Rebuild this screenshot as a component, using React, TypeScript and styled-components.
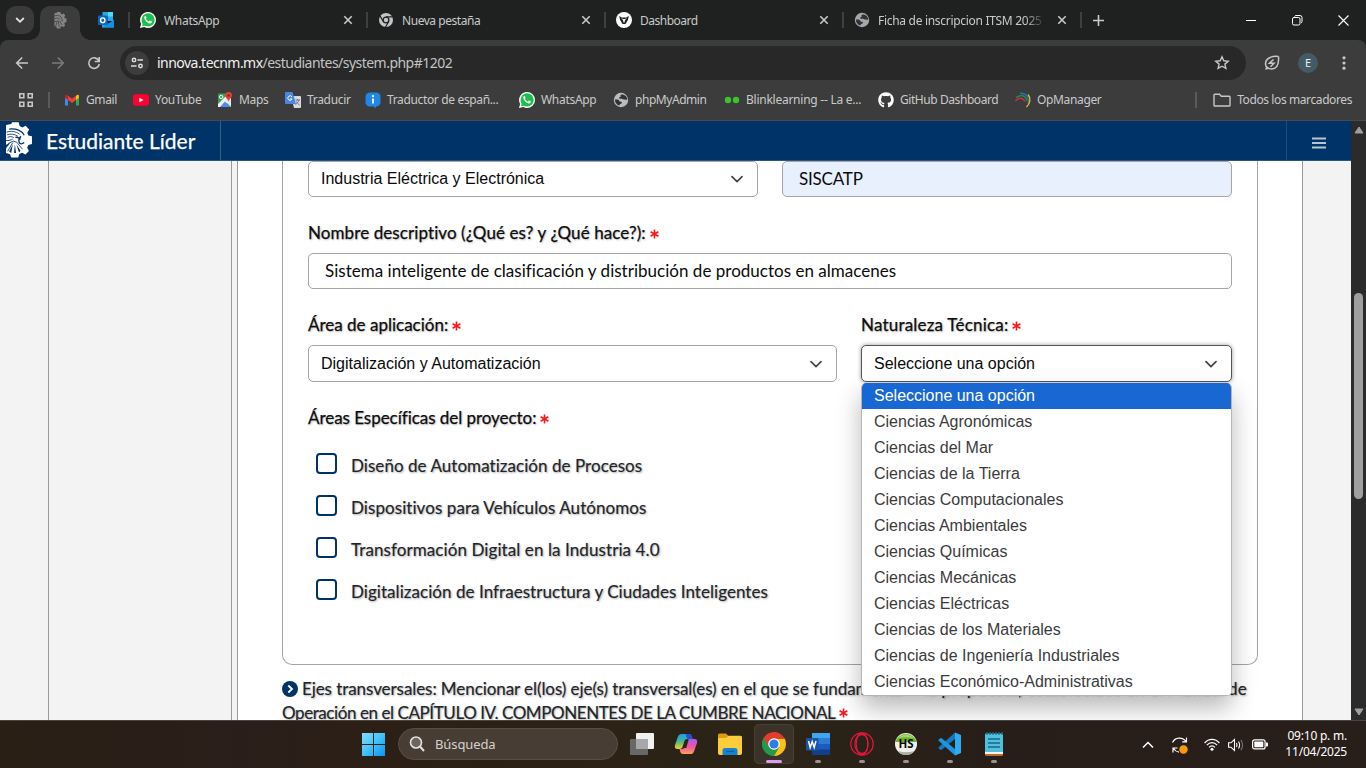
import React from "react";
import styled, { createGlobalStyle, css } from "styled-components";
import { FaGithub } from "react-icons/fa";

const uiFont = `"Noto Sans", "Open Sans", sans-serif`;
const pageFont = `"Lato", "Open Sans", sans-serif`;
const fieldFont = `"Liberation Sans", Arial, sans-serif`;

const GlobalStyle = createGlobalStyle`
  * { box-sizing: border-box; }
  html, body { margin: 0; padding: 0; overflow: hidden; }
  svg { display: block; flex: none; }
`;

const Screen = styled.div`
  width: 1366px;
  height: 768px;
  display: flex;
  flex-direction: column;
  overflow: hidden;
  font-family: ${uiFont};
  font-size: 12px;
`;

/* ---------- Browser tabs ---------- */

const TabStrip = styled.div`
  display: flex;
  align-items: center;
  height: 40px;
  padding-left: 6px;
  background: #1f2120;
  color: #c9cac9;
  flex: none;
`;

const TabSearch = styled.div`
  width: 28px;
  height: 28px;
  border-radius: 10px;
  background: #3a3a3a;
  display: flex;
  align-items: center;
  justify-content: center;
`;

const ActiveTab = styled.div`
  align-self: flex-end;
  position: relative;
  width: 40px;
  height: 34px;
  margin-left: 6px;
  border-radius: 10px 10px 0 0;
  background: #3c3c3c;
  display: flex;
  align-items: center;
  justify-content: center;
  padding-bottom: 6px;
  &::before,
  &::after {
    content: "";
    position: absolute;
    bottom: 0;
    width: 10px;
    height: 10px;
  }
  &::before {
    left: -10px;
    background: radial-gradient(circle at 0 0, transparent 9.5px, #3c3c3c 10px);
  }
  &::after {
    right: -10px;
    background: radial-gradient(circle at 100% 0, transparent 9.5px, #3c3c3c 10px);
  }
`;

const PinnedTab = styled.div`
  width: 48px;
  display: flex;
  padding-left: 18px;
`;

const Tab = styled.div`
  width: 238px;
  height: 16px;
  border-left: 2px solid #3f4140;
  padding: 0 13px 0 10px;
  display: flex;
  align-items: center;
  gap: 8px;
`;

const TabTitle = styled.span<{ $fade?: boolean; $spacing?: number }>`
  flex: 1;
  min-width: 0;
  overflow: hidden;
  white-space: nowrap;
  line-height: 18px;
  padding-top: 1px;
  letter-spacing: ${(p) => p.$spacing ?? -0.2}px;
  ${(p) =>
    p.$fade &&
    css`
      mask-image: linear-gradient(90deg, #000 calc(100% - 24px), transparent calc(100% - 4px));
    `}
`;

const NewTab = styled.div`
  width: 34px;
  height: 16px;
  border-left: 2px solid #3f4140;
  display: flex;
  align-items: center;
  justify-content: center;
`;

const WindowControls = styled.div`
  margin-left: auto;
  display: flex;
  div {
    width: 46px;
    display: flex;
    justify-content: center;
    align-items: center;
  }
`;

/* ---------- Toolbar ---------- */

const Toolbar = styled.div`
  display: flex;
  align-items: center;
  height: 46px;
  padding-left: 4px;
  background: #3c3c3c;
  border-radius: 8px 8px 0 0;
  flex: none;
`;

const ChromeBack = styled.div`
  background: #1f2120;
  flex: none;
`;

const ToolButton = styled.div`
  width: 36px;
  display: flex;
  justify-content: center;
`;

const Omnibox = styled.div`
  width: 1126px;
  height: 34px;
  margin: 0 8px 0 8px;
  border-radius: 17px;
  background: #282828;
  display: flex;
  align-items: center;
  padding: 0 16px 0 5px;
`;

const SiteInfo = styled.div`
  width: 24px;
  height: 24px;
  border-radius: 12px;
  background: #3d3d3d;
  display: flex;
  align-items: center;
  justify-content: center;
`;

const Url = styled.span`
  flex: 1;
  margin-left: 8px;
  padding-bottom: 1px;
  font-size: 14px;
  letter-spacing: -0.53px;
  color: #c3c4c3;
  b {
    font-weight: 400;
    color: #f1f1f1;
  }
`;

const Avatar = styled.div`
  width: 20px;
  height: 20px;
  border-radius: 10px;
  background: #455a67;
  color: #e6eef2;
  font-size: 11px;
  line-height: 20px;
  text-align: center;
`;

/* ---------- Bookmarks ---------- */

const Bookmarks = styled.div`
  display: flex;
  align-items: center;
  height: 35px;
  padding: 0 14px 6px 18px;
  background: #3c3c3c;
  border-bottom: 1px solid #4a4a4a;
  color: #c9cac9;
  flex: none;
`;

const BarDivider = styled.div`
  width: 2px;
  height: 16px;
  flex: none;
  background: #5a5a5a;
`;

const Bookmark = styled.div<{ $width?: number; $spacing?: number }>`
  width: ${(p) => (p.$width ? `${p.$width}px` : "auto")};
  flex: none;
  display: flex;
  align-items: center;
  gap: 6px;
  white-space: nowrap;
  line-height: 18px;
  letter-spacing: ${(p) => p.$spacing ?? -0.2}px;
`;

const BookmarkList = styled.div`
  display: flex;
  width: 1131px;
  padding-left: 14px;
`;

const AllBookmarks = styled.div`
  display: flex;
  margin-left: auto;
`;

/* ---------- Web page ---------- */

const Viewport = styled.div`
  display: flex;
  height: 599px;
  flex: none;
  overflow: hidden;
`;

const Page = styled.div`
  width: 1351px;
  display: flex;
  flex-direction: column;
  font-family: ${pageFont};
`;

const Header = styled.div`
  height: 40px;
  background: #003468;
  border-bottom: 1px solid #2a5583;
  display: flex;
  flex: none;
`;

const Brand = styled.div`
  width: 221px;
  border-right: 1px solid #355f88;
  padding-left: 5px;
  display: flex;
  align-items: center;
  gap: 13px;
  color: #fff;
  font-size: 21px;
  letter-spacing: 0;
  -webkit-text-stroke: 0.25px currentColor;
`;

const MenuButton = styled.div`
  margin-left: auto;
  width: 65px;
  border-left: 1px solid #1f4c7b;
  display: flex;
  align-items: center;
  justify-content: center;
  padding-top: 5px;
`;

const Columns = styled.div`
  flex: 1;
  min-height: 0;
  display: flex;
  background: #f3f3f3;
`;

const Gutter = styled.div`
  width: 49px;
  border-right: 1px solid #999;
`;

const SideColumn = styled.div`
  width: 183px;
  border-right: 1px solid #999;
  margin-right: 5px;
`;

const Main = styled.div`
  width: 1066px;
  border-left: 1px solid #999;
  border-right: 1px solid #999;
  background: #fff;
  padding: 0 44px;
  overflow: hidden;
`;

const Panel = styled.div`
  height: 504px;
  border: 1px solid #a5a5a5;
  border-top: 0;
  border-radius: 0 0 10px 10px;
  padding: 0 25px;
`;

const Row = styled.div`
  display: flex;
  gap: 24px;
`;

const FieldGroup = styled.div<{ $width: number }>`
  position: relative;
  width: ${(p) => p.$width}px;
`;

const Label = styled.div<{ $spacing?: number }>`
  height: 56px;
  padding-top: 26px;
  line-height: 20px;
  font-size: 17px;
  color: #0c0c0c;
  -webkit-text-stroke: 0.25px currentColor;
  text-shadow: 1px 1px 2px #bbb;
  white-space: nowrap;
  letter-spacing: ${(p) => p.$spacing ?? 0}px;
`;

const Required = styled.span`
  margin-left: 4px;
  display: inline-flex;
`;

const Select = styled.div<{ $height?: number; $open?: boolean }>`
  height: ${(p) => p.$height ?? 37}px;
  border: 1px solid ${(p) => (p.$open ? "#555" : "#a5a5a5")};
  border-radius: 5px;
  padding: 0 14px 0 12px;
  display: flex;
  align-items: center;
  justify-content: space-between;
  background: #fff;
  font: 16px ${fieldFont};
  color: #0a0a0a;
  ${(p) =>
    p.$open &&
    css`
      box-shadow: 0 0 4px rgba(0, 0, 0, 0.4);
    `}
`;

const Input = styled.div<{ $filled?: boolean; $spacing?: number }>`
  height: 36px;
  border: 1px solid #a5a5a5;
  border-radius: 5px;
  padding: 0 16px;
  line-height: 34px;
  background: ${(p) => (p.$filled ? "#e8f0fe" : "#fff")};
  font-size: 17px;
  letter-spacing: ${(p) => p.$spacing ?? 0}px;
  color: #0a0a0a;
  white-space: nowrap;
`;

const Dropdown = styled.div`
  position: absolute;
  top: 94px;
  left: 0;
  width: 371px;
  border: 1px solid #b5b5b5;
  border-top: 0;
  border-radius: 5px;
  background: #fff;
  overflow: hidden;
  box-shadow: 0 12px 24px rgba(0, 0, 0, 0.28);
  z-index: 2;
`;

const Option = styled.div<{ $selected?: boolean }>`
  height: 26px;
  padding-left: 12px;
  font: 16px/26px ${fieldFont};
  color: ${(p) => (p.$selected ? "#fff" : "#3b3b3b")};
  background: ${(p) => (p.$selected ? "#1967d2" : "#fff")};
`;

const CheckList = styled.div`
  padding: 11px 0 0 8px;
`;

const CheckRow = styled.div`
  height: 42px;
  display: flex;
  gap: 14px;
`;

const CheckBox = styled.span`
  width: 21px;
  height: 21px;
  margin-top: 4px;
  border: 2px solid #003468;
  border-radius: 4px;
  background: #fff;
`;

const CheckText = styled.span<{ $spacing?: number }>`
  margin-top: 7px;
  font-size: 17px;
  line-height: 20px;
  color: #212529;
  text-shadow: 1px 1px 2px #aaa;
  white-space: nowrap;
  letter-spacing: ${(p) => p.$spacing ?? 0}px;
  -webkit-text-stroke: 0.15px currentColor;
`;

const Note = styled.div`
  margin-top: 12px;
  font-size: 17px;
  line-height: 24px;
  color: #212529;
  text-shadow: 1px 1px 2px #aaa;
  -webkit-text-stroke: 0.15px currentColor;
`;

const NoteLine = styled.div<{ $spacing: number }>`
  display: flex;
  align-items: center;
  white-space: nowrap;
  letter-spacing: ${(p) => p.$spacing}px;
`;

const NoteEnd = styled.span`
  margin-left: auto;
  padding-right: 11px;
  letter-spacing: 0.2px;
`;

const Scrollbar = styled.div`
  width: 15px;
  background: #2b2b2b;
  display: flex;
  flex-direction: column;
  align-items: center;
  padding: 5px 0 4px;
`;

const Thumb = styled.div`
  width: 9px;
  height: 206px;
  margin: 159px 0 auto;
  border-radius: 5px;
  background: #9f9f9f;
`;

/* ---------- Taskbar ---------- */

const Taskbar = styled.div`
  height: 48px;
  flex: none;
  border-top: 1px solid #48443f;
  background: linear-gradient(90deg, #2a1f15 0%, #291e19 18%, #2d2015 32%, #2b2417 58%, #281e19 72%, #281e1a 100%);
  display: flex;
  align-items: center;
  padding: 0 19px 0 354px;
`;

const StartButton = styled.div`
  width: 44px;
  padding-left: 8px;
`;

const SearchBox = styled.div`
  width: 220px;
  height: 32px;
  margin: 0 2px 1px 0;
  border-radius: 16px;
  border: 1px solid #574e44;
  background: #483d34;
  display: flex;
  align-items: center;
  gap: 10px;
  padding-left: 10px;
  font-size: 13px;
  letter-spacing: -0.1px;
  color: #d6d1cc;
`;

const AppCell = styled.div<{ $active?: boolean }>`
  position: relative;
  width: 40px;
  height: 40px;
  margin: 0 2px 1px;
  border-radius: 5px;
  display: flex;
  align-items: center;
  justify-content: center;
  ${(p) =>
    p.$active &&
    css`
      background: #3b3329;
      box-shadow: inset 0 0 0 1px #454036;
    `}
`;

const RunMark = styled.i<{ $active?: boolean }>`
  position: absolute;
  bottom: 1px;
  left: ${(p) => (p.$active ? 12 : 17)}px;
  width: ${(p) => (p.$active ? 16 : 6)}px;
  height: 3px;
  border-radius: 2px;
  background: ${(p) => (p.$active ? "#dc9df0" : "#98938d")};
`;

const Tray = styled.div`
  margin-left: auto;
  display: flex;
  align-items: center;
  color: #fff;
`;

const TrayIcon = styled.div<{ $width: number }>`
  width: ${(p) => p.$width}px;
  display: flex;
  justify-content: center;
`;

const Clock = styled.div`
  width: 71px;
  padding-bottom: 1px;
  text-align: right;
  line-height: 16px;
  font-size: 12px;
  letter-spacing: -0.22px;
  white-space: nowrap;
`;

/* ---------- Icons ---------- */

const CloseIcon = () => (
  <svg width="10" height="10" viewBox="0 0 10 10" stroke="#c9cac9" strokeWidth="1.6">
    <path d="M1.3 1.3l7.4 7.4M8.7 1.3L1.3 8.7" />
  </svg>
);

const WhatsAppIcon = () => (
  <svg width="16" height="16" viewBox="0 0 16 16">
    <path d="M8 0a8 8 0 0 1 0 16c-1.4 0-2.7-.3-3.8-1L0 16l1.1-4A8 8 0 0 1 8 0z" fill="#fff" />
    <circle cx="8.1" cy="7.9" r="6.6" fill="#1dbf4e" />
    <path d="M2 14.2l.9-3.2 2.5 2.4z" fill="#1dbf4e" />
    <path d="M5.7 4.2c-.3-.3-.8-.1-1.1.3-.7.9-.5 2.1.9 3.9 1.6 2.1 3.3 3.1 4.7 3 .9-.1 1.7-.8 1.7-1.6 0-.3-.1-.4-2.1-1.3-.5.1-.7 1-1.2.9C7.400 9 6.500 7.900 6 7c0-.4.7-.7.6-1.2z" fill="#fff" />
  </svg>
);

const GlobeIcon = ({ color = "#a4a8ab" }: { color?: string }) => (
  <svg width="16" height="16" viewBox="0 0 16 16">
    <circle cx="8" cy="8" r="7.2" fill={color} />
    <path d="M8.500 2.400c-.7.5-1.300.8-.9 1.600.4.7-.3 1.100-1 1.300-.8.2-.6.9-.1 1.300.8.5 2.200-.3 3 .4.8.8 1.700.2 2.600.6.8.4 1.500.2 2.300-.3C14 4.900 12.200 2.300 8.500 2.400z" fill="#303233" />
    <path d="M2 7.400c1.200.1 2.300-.2 3.400.4.9.5.7 1.500 1.500 1.800.9.3 1.800.1 2 .9.2.9-.7 1.300-1.600 1.500-.7.2-.4 1.100-1.100 1.400C3.600 12.600 1.700 10.500 2 7.400z" fill="#303233" />
  </svg>
);

const ChromeMono = () => (
  <svg width="16" height="16" viewBox="0 0 16 16">
    <circle cx="8" cy="8" r="7" fill="#c3c6c9" />
    <circle cx="8" cy="8" r="3.5" fill="#1f2120" />
    <circle cx="8" cy="8" r="2.2" fill="#c3c6c9" />
    <path d="M8 4.900h6.600M5.300 9.500L2 3.900M10.700 9.500l-3.300 5.700" stroke="#1f2120" strokeWidth="1.200" />
  </svg>
);

const ChromeColor = () => (
  <svg width="24" height="24" viewBox="0 0 24 24">
    <path d="M12 12L1.600 6A12 12 0 0 0 12 24l5.200-9z" fill="#229a4b" />
    <path d="M12 6.600h10.700A12 12 0 0 1 12 24l5.200-9z" fill="#fbc116" />
    <path d="M1.600 6A12 12 0 0 1 12 0c4.400 0 8.400 2.500 10.700 6.600H12L6.500 14z" fill="#e33b2e" />
    <circle cx="12" cy="12" r="5.8" fill="#fff" />
    <circle cx="12" cy="12" r="4.6" fill="#2b7de9" />
  </svg>
);

const OutlookIcon = () => (
  <svg width="16" height="16" viewBox="0 0 16 16">
    <path d="M4.500 0H15v9H4.500z" fill="#2aa8ea" />
    <path d="M10 0h5v4.500h-5z" fill="#50d9ff" />
    <path d="M4.500 4.500H10V9H4.500z" fill="#0364b8" />
    <path d="M4 8l6.500 4L16 8v7.500H4z" fill="#28a8ea" />
    <path d="M4 15.500L16 8v7.500z" fill="#1490df" />
    <rect y="3.500" width="9.500" height="9.500" rx=".8" fill="#0a66bf" />
    <ellipse cx="4.750" cy="8.250" rx="2.200" ry="2.400" fill="none" stroke="#fff" strokeWidth="1.400" />
  </svg>
);

const GearShape = ({ color }: { color: string }) => (
  <path
    fill={color}
    d="M1 2.500l5-.9L6.800 0h6.400l.9 3.600 2.700 1.300 3.100-1.700 3.400 3.600-1.800 3.200 1 2.600 3.500.9v7.300l-3.500 1-1.100 2.600 1.700 3.300-3.400 3.400-3.200-1.900-2.700 1.300-1 3.500H6l-1.100-3.300L1 29.500z"
  />
);

const TecLogo = () => (
  <svg width="28" height="37" viewBox="0 0 27 35">
    <GearShape color="#fff" />
    <g fill="none" stroke="#003468" strokeWidth=".8">
      <path d="M4 6.500c6-1 12 1 14.500 6" strokeWidth="1.200" />
      <path d="M1.500 9.500c4-1.500 9-1 12.500 2M2 12c4-1.200 7-.8 10.500 1.500M2.500 14.500c2-1 4-1 6 .2M1 17.500c2.500.3 5-.3 6.500-1.500" />
      <path d="M10 14.500c2.500-.5 4 .5 5 2M15.500 13.500c-2 1.500-2.700 4-1.500 6.500 1.200 1 3 .8 4.500-.5" strokeWidth="1.300" />
      <path d="M3 20.500l5-2.500 4 1.500M7.500 19.500L2.500 28M12 20l5 6" />
    </g>
    <g fill="#003468">
      <path d="M7.500 21L4 28l2 1.500zM9.500 21l-.8 8.500h2zM11 21l2.500 8 1.500-1.500zM1 21.500l4-1.500-4 5z" />
    </g>
  </svg>
);

const TabLogo = () => (
  <svg width="13" height="17" viewBox="0 0 27 35">
    <GearShape color="#858585" />
    <g fill="none" stroke="#4b4b4b" strokeWidth="2">
      <path d="M1 8c8-3 17 0 16 12M2 14c4-3 8-2 11 2M1 20l8-2M7 19L3 31M9 19l2 12M11 18l6 9" />
    </g>
  </svg>
);

const GmailIcon = () => (
  <svg width="16" height="16" viewBox="0 0 16 16">
    <path d="M1 4v9.500h3V6.500z" fill="#4285f4" />
    <path d="M15 4v9.500h-3V6.500z" fill="#34a853" />
    <path d="M12 3.800L13 3q2-.7 2 1.300v1.500l-3 2.300z" fill="#fbbc04" />
    <path d="M4 3.800L3 3Q1 2.300 1 4.300v1.500l3 2.300z" fill="#c5221f" />
    <path d="M4 3.800l4 3 4-3v4.300l-4 3-4-3z" fill="#ea4335" />
  </svg>
);

const YouTubeIcon = () => (
  <svg width="16" height="16" viewBox="0 0 16 16">
    <rect y="2.300" width="16" height="11.400" rx="3" fill="#ff0033" />
    <path d="M6.300 5.700v4.600L10.500 8z" fill="#fff" />
  </svg>
);

const MapsIcon = () => (
  <svg width="16" height="16" viewBox="0 0 16 16">
    <rect x="1" y="1.500" width="13" height="13.500" rx="1" fill="#34a05a" />
    <path d="M1 12l9-9 4 4-8 8H1z" fill="#f3f3f3" />
    <path d="M7.500 8.500L14 15V6l-3-2z" fill="#e8e8e8" />
    <path d="M3 15l5-5.500 5 5.500z" fill="#4b8bf5" />
    <circle cx="4.200" cy="5" r="1.700" fill="none" stroke="#fff" />
    <path d="M11.500 0a3.500 3.500 0 0 1 3.500 3.500c0 2-3 3.500-3.300 6.500C11.300 7 8 5.500 8 3.500A3.500 3.500 0 0 1 11.500 0z" fill="#dc4437" />
    <circle cx="11.500" cy="3.500" r="1.200" fill="#8b2219" />
  </svg>
);

const TranslateIcon = () => (
  <svg width="16" height="16" viewBox="0 0 16 16">
    <path d="M6 4h9q1 0 1 1v10q0 1-1 1H9z" fill="#d7d9dc" />
    <path d="M1 0h6.500L11 12H1q-1 0-1-1V1q0-1 1-1z" fill="#4a86e8" />
    <path d="M7 4.900A2.200 2.200 0 1 0 7.100 7H5" fill="none" stroke="#fff" strokeWidth="1" />
    <path d="M10.500 8H15M12.500 7v1M14 8c-.5 2-2 3.500-3.500 4.500M11.500 9.500c.5 1.500 1.500 2.500 3 3.500" stroke="#727679" fill="none" />
  </svg>
);

const InfoIcon = () => (
  <svg width="16" height="16" viewBox="0 0 16 16">
    <path d="M4.500.5h7Q15.500 1 15.500 5v5q0 4-4 4.300l-1 1.700-2-1.600h-4Q.5 14 .5 10V5Q.5 1 4.500.5z" fill="#1f86ea" />
    <circle cx="8" cy="4.200" r="1.100" fill="#fff" />
    <path d="M8 6.500v5" stroke="#fff" strokeWidth="1.800" />
  </svg>
);

const BlinkIcon = () => (
  <svg width="16" height="16" viewBox="0 0 16 16" fill="#3cc42b">
    <circle cx="4" cy="8" r="3.200" />
    <circle cx="12" cy="8" r="3.200" />
  </svg>
);

const OpManagerIcon = () => (
  <svg width="16" height="16" viewBox="0 0 16 16" fill="none">
    <path d="M.5 9C3 5.500 8 5 10 9.500" stroke="#d12e43" strokeWidth="1.400" />
    <path d="M1.500 5.500C5.500 2 11 3.500 12 9" stroke="#169a55" strokeWidth="1.400" />
    <path d="M5 1.300C11 .8 15 6 13 12" stroke="#2b71b8" strokeWidth="1.300" />
    <path d="M13 2.500c3 3.500 2.500 9-1.500 12.500" stroke="#f2c01c" strokeWidth="1.300" />
  </svg>
);

const Chevron = () => (
  <svg width="12" height="12" viewBox="0 0 12 12" fill="none" stroke="#424649" strokeWidth="1.700" strokeLinecap="round" strokeLinejoin="round">
    <path d="M1 3.700l5 5 5-5" />
  </svg>
);

const Asterisk = () => (
  <Required>
    <svg width="9" height="10" viewBox="0 0 9 10" stroke="#ff1616" strokeWidth="1.600">
      <path d="M4.500.5v9M.6 2.800l7.800 4.400M8.400 2.800L.6 7.200" />
    </svg>
  </Required>
);

const FolderIcon = () => (
  <svg width="24" height="22" viewBox="0 0 24 22">
    <path d="M0 2q0-1.500 1.500-1.500H8L10.500 3H22q2 0 2 2v15.500H0z" fill="#dd9b10" />
    <path d="M0 6q0-1 1-1h7l2.500-2.300H22.500q1.500 0 1.500 1.500V20q0 2-2 2H2q-2 0-2-2z" fill="#fdcd3d" />
    <path d="M4.500 22v-4.500q0-2.500 2.500-2.500h10q2.500 0 2.500 2.500V22z" fill="#1384cf" />
    <path d="M8 18.500h8" stroke="#0a5d9e" strokeWidth="1.300" />
  </svg>
);

const CopilotIcon = () => (
  <svg width="24" height="22" viewBox="0 0 24 22">
    <defs>
      <linearGradient id="cpA" x1="0" y1="0" x2="0" y2="1">
        <stop offset="0" stopColor="#1d9bea" />
        <stop offset=".5" stopColor="#49b98d" />
        <stop offset="1" stopColor="#f4cf1c" />
      </linearGradient>
      <linearGradient id="cpB" x1="0" y1="0" x2="0" y2="1">
        <stop offset="0" stopColor="#a75cf0" />
        <stop offset=".55" stopColor="#f3579a" />
        <stop offset="1" stopColor="#ffa25b" />
      </linearGradient>
    </defs>
    <path d="M7 1h8q2 0 2.700 2l.8 3H13q-2 0-2.600 2L8.500 14q-.8 2-2.800 2H3.500Q0 16 1 12L4 3.500Q4.800 1 7 1z" fill="url(#cpA)" />
    <path d="M12 1h3q2 0 2.700 2l.8 3h-4Q13 6 12.500 4z" fill="#1d51d8" />
    <path d="M17 21H9q-2 0-2.700-2l-.8-3H8q2 0 2.600-2L13 8q.8-2 2.800-2h4.700Q24 6 23 10l-3 8.500Q19.200 21 17 21z" fill="url(#cpB)" />
    <path d="M10.600 13L12.800 7h1.800l-2.400 8H9.500z" fill="#2b2417" />
  </svg>
);

const WordIcon = () => (
  <svg width="24" height="22" viewBox="0 0 24 22">
    <rect x="6" width="18" height="22" rx="1" fill="#1b5bbd" />
    <rect x="6" width="18" height="5.500" fill="#41a5ee" />
    <rect x="6" y="5.500" width="18" height="5.500" fill="#2b7cd3" />
    <rect x="6" y="16.500" width="18" height="5.500" fill="#123f8c" />
    <rect y="5" width="12.500" height="12.500" rx="1" fill="#1a52ae" />
    <path d="M2.500 8l1.700 6.500L6.200 8.500l2 6L10 8" fill="none" stroke="#fff" strokeWidth="1.500" />
  </svg>
);

const OperaIcon = () => (
  <svg width="24" height="24" viewBox="0 0 24 24" fill="none" stroke="#e3173e" strokeWidth="1.200">
    <circle cx="12" cy="12" r="11.200" />
    <ellipse cx="12" cy="12" rx="5.800" ry="11" />
    <path d="M7.500 4.500C10 .8 17.500 1 18 11.500c0 11-7.500 12.500-10.500 8" />
    <path d="M16 4C11 1 5 3.500 5 12s6 11 11 8" />
  </svg>
);

const HeidiIcon = () => (
  <svg width="22" height="22" viewBox="0 0 22 22">
    <circle cx="11" cy="11" r="11" fill="#f0f0ec" />
    <path d="M.4 9a11 11 0 0 1 21.200 0z" fill="#6cb32a" />
    <path d="M3 5.500Q11-2.500 19 5.500 11 3 3 5.500z" fill="#a4d66c" />
    <path d="M3 18q8 2.500 16 0-3 4-8 4t-8-4z" fill="#a9ada5" />
    <text x="11" y="15" fontSize="11.500" fontWeight="700" textAnchor="middle" fontFamily="Open Sans, sans-serif" fill="#0b0b0b">HS</text>
  </svg>
);

const CodeIcon = () => (
  <svg width="24" height="24" viewBox="0 0 24 24">
    <path d="M17 .5L23 3v18l-6 2.500z" fill="#2fabf1" />
    <path d="M17 .5L.7 15.200q-.5.8.3 1.500l1.300 1.100q.7.4 1.400-.1L17 7z" fill="#1579bf" />
    <path d="M17 23.500L.7 8.800q-.5-.8.3-1.500l1.300-1.100q.7-.4 1.400.1L17 17z" fill="#1f95dc" />
  </svg>
);

const NotepadIcon = () => (
  <svg width="20" height="24" viewBox="0 0 20 24">
    <path d="M1 20h18v2.500q0 1.500-1.500 1.500h-15Q1 24 1 22.500z" fill="#b66c2d" />
    <rect x="1" y="19" width="18" height="3" fill="#f3f3f3" />
    <rect x="1" y="1.500" width="18" height="18.500" rx="1" fill="#52bfdd" />
    <path d="M4 7h12M4 11h12M4 15h12" stroke="#146887" strokeWidth="1.500" />
    <path d="M3 0v3M6 0v3M9 0v3M12 0v3M15 0v3M18 0v3" stroke="#1b6f8d" strokeWidth="1.200" />
  </svg>
);

const DashboardIcon = () => (
  <svg width="16" height="16" viewBox="0 0 16 16">
    <circle cx="8" cy="8" r="8" fill="#fff" />
    <path d="M3.200 3.800l2.300 1.700h5l2.300-1.700-.8 4L9.500 12h-3L4 7.800z" fill="#222" />
    <path d="M5 6.300l2 1.700.5 2.500h1L9 8l2-1.700-2.200.7H7.200z" fill="#fff" />
  </svg>
);

const TaskViewIcon = () => (
  <svg width="24" height="22" viewBox="0 0 24 22">
    <rect x="6" width="18" height="16" rx="1" fill="#f1f1f1" />
    <rect y="6" width="18" height="16" rx="1" fill="#686967" />
    <path d="M6 6h12v10H6z" fill="#a8a8a8" />
  </svg>
);

const TABS = [
  { title: "WhatsApp", icon: <WhatsAppIcon />, spacing: -0.3 },
  { title: "Nueva pestaña", icon: <ChromeMono />, spacing: -0.45 },
  { title: "Dashboard", icon: <DashboardIcon />, spacing: -0.5 },
  { title: "Ficha de inscripcion ITSM 2025 S", icon: <GlobeIcon />, fade: true, spacing: -0.3 },
];

const BOOKMARKS = [
  { name: "Gmail", width: 69, icon: <GmailIcon />, spacing: -0.4 },
  { name: "YouTube", width: 84, icon: <YouTubeIcon />, spacing: -0.3 },
  { name: "Maps", width: 68, icon: <MapsIcon />, spacing: -0.3 },
  { name: "Traducir", width: 80, icon: <TranslateIcon />, spacing: -0.3 },
  { name: "Traductor de españ...", width: 154, icon: <InfoIcon />, spacing: -0.35 },
  { name: "WhatsApp", width: 94, icon: <WhatsAppIcon />, spacing: -0.3 },
  { name: "phpMyAdmin", width: 111, icon: <GlobeIcon color="#b9bdc0" />, spacing: -0.45 },
  { name: "Blinklearning -- La e...", width: 154, icon: <BlinkIcon />, spacing: -0.25 },
  { name: "GitHub Dashboard", width: 137, icon: <FaGithub size={16} color="#fff" />, spacing: -0.43 },
  { name: "OpManager", width: 100, icon: <OpManagerIcon />, spacing: -0.35 },
];

const OPTIONS = [
  "Seleccione una opción",
  "Ciencias Agronómicas",
  "Ciencias del Mar",
  "Ciencias de la Tierra",
  "Ciencias Computacionales",
  "Ciencias Ambientales",
  "Ciencias Químicas",
  "Ciencias Mecánicas",
  "Ciencias Eléctricas",
  "Ciencias de los Materiales",
  "Ciencias de Ingeniería Industriales",
  "Ciencias Económico-Administrativas",
];

const AREAS = [
  { text: "Diseño de Automatización de Procesos", spacing: 0.05 },
  { text: "Dispositivos para Vehículos Autónomos", spacing: 0.07 },
  { text: "Transformación Digital en la Industria 4.0", spacing: 0.09 },
  { text: "Digitalización de Infraestructura y Ciudades Inteligentes", spacing: 0.05 },
];

const APPS = [
  { icon: <TaskViewIcon /> },
  { icon: <CopilotIcon /> },
  { icon: <FolderIcon /> },
  { icon: <ChromeColor />, running: true, active: true },
  { icon: <WordIcon />, running: true },
  { icon: <OperaIcon />, running: true },
  { icon: <HeidiIcon />, running: true },
  { icon: <CodeIcon />, running: true },
  { icon: <NotepadIcon />, running: true },
];

const BrowserTabs = () => (
  <TabStrip>
    <TabSearch>
      <svg width="10" height="10" viewBox="0 0 10 10" fill="none" stroke="#e3e3e3" strokeWidth="1.800">
        <path d="M1.200 3L5 6.800 8.800 3" />
      </svg>
    </TabSearch>
    <ActiveTab>
      <TabLogo />
    </ActiveTab>
    <PinnedTab>
      <OutlookIcon />
    </PinnedTab>
    {TABS.map((tab) => (
      <Tab key={tab.title}>
        {tab.icon}
        <TabTitle $fade={tab.fade} $spacing={tab.spacing}>{tab.title}</TabTitle>
        <CloseIcon />
      </Tab>
    ))}
    <NewTab>
      <svg width="11" height="11" viewBox="0 0 11 11" stroke="#c9cac9" strokeWidth="1.600">
        <path d="M5.500 0v11M0 5.500h11" />
      </svg>
    </NewTab>
    <WindowControls>
      <div>
        <svg width="10" height="10"><path d="M0 5.500h10" stroke="#fff" /></svg>
      </div>
      <div>
        <svg width="11" height="11" viewBox="0 0 11 11" fill="none" stroke="#fff">
          <rect x=".5" y="2.500" width="7.500" height="7.500" rx="1.500" />
          <path d="M2.500 1.500Q3 .5 4 .5h4Q10 .5 10 2.500v4q0 1-1 1.500" />
        </svg>
      </div>
      <div>
        <svg width="11" height="11" viewBox="0 0 11 11" stroke="#fff" strokeWidth="1.100">
          <path d="M.5.5l10 10M10.500.5l-10 10" />
        </svg>
      </div>
    </WindowControls>
  </TabStrip>
);

const BrowserToolbar = () => (
  <ChromeBack>
    <Toolbar>
      <ToolButton>
        <svg width="14" height="14" viewBox="0 0 14 14" fill="none" stroke="#c7c7c7" strokeWidth="1.600">
          <path d="M13 7H2M7.200 1.500L1.700 7l5.500 5.500" />
        </svg>
      </ToolButton>
      <ToolButton>
        <svg width="14" height="14" viewBox="0 0 14 14" fill="none" stroke="#7b7b7b" strokeWidth="1.600">
          <path d="M1 7h11M6.800 1.500L12.300 7l-5.500 5.500" />
        </svg>
      </ToolButton>
      <ToolButton>
        <svg width="14" height="14" viewBox="0 0 14 14" fill="none" stroke="#c7c7c7" strokeWidth="1.600">
          <path d="M11.700 4.500A5.300 5.300 0 1 0 12.300 8M12.200 1v4.500H7.700" />
        </svg>
      </ToolButton>
      <Omnibox>
        <SiteInfo>
          <svg width="14" height="12" viewBox="0 0 14 12" fill="none" stroke="#dcdcdc" strokeWidth="1.500">
            <circle cx="4" cy="3" r="1.700" />
            <path d="M7.500 3H13M1 9h5.500" />
            <circle cx="10.500" cy="9" r="1.700" />
          </svg>
        </SiteInfo>
        <Url><b>innova.tecnm.mx</b>/estudiantes/system.php#1202</Url>
        <svg width="16" height="16" viewBox="0 0 16 16" fill="none" stroke="#c7c7c7" strokeWidth="1.400">
          <path d="M8 1.800l1.800 4 4.400.4-3.300 2.900 1 4.300L8 11.200l-3.900 2.200 1-4.300-3.300-2.900 4.400-.4z" />
        </svg>
      </Omnibox>
      <ToolButton>
        <svg width="16" height="16" viewBox="0 0 16 16" fill="none" stroke="#c7c7c7" strokeWidth="1.500">
          <path d="M14.500 1.500C8 .8 1.500 3 1.500 9c0 2 .7 3.500 2.500 5M14.500 1.500c.5 6-1 12-6.500 12.500-2 .1-3.500-.5-4.500-1.500L1.500 14.500" />
          <path d="M9.500 4.500L5.500 8.200h4.500L6.500 11.800" />
        </svg>
      </ToolButton>
      <ToolButton>
        <Avatar>E</Avatar>
      </ToolButton>
      <ToolButton>
        <svg width="4" height="14" viewBox="0 0 4 14" fill="#c7c7c7">
          <circle cx="2" cy="1.800" r="1.600" />
          <circle cx="2" cy="7" r="1.600" />
          <circle cx="2" cy="12.200" r="1.600" />
        </svg>
      </ToolButton>
    </Toolbar>
  </ChromeBack>
);

const BookmarkBar = () => (
  <Bookmarks>
    <Bookmark $width={30}>
      <svg width="16" height="16" viewBox="0 0 16 16" fill="none" stroke="#c7c7c7" strokeWidth="1.600">
        <path d="M1.800 1.800h4v4h-4zM10.200 1.800h4v4h-4zM1.800 10.200h4v4h-4zM10.200 10.200h4v4h-4z" />
      </svg>
    </Bookmark>
    <BarDivider />
    <BookmarkList>
      {BOOKMARKS.map((b) => (
        <Bookmark key={b.name} $width={b.width} $spacing={b.spacing}>
          {b.icon}
          {b.name}
        </Bookmark>
      ))}
    </BookmarkList>
    <AllBookmarks>
      <Bookmark $spacing={-0.4}>
        <BarDivider />
        <svg width="28" height="16" viewBox="0 0 28 16" fill="none" stroke="#c7c7c7" strokeWidth="1.400">
          <path d="M11 3q0-.8.8-.8h4.700l1.800 2h7.900q.8 0 .8.8v8.200q0 .8-.8.800H11.800q-.8 0-.8-.8z" />
        </svg>
        Todos los marcadores
      </Bookmark>
    </AllBookmarks>
  </Bookmarks>
);

const LabelText = ({ text, spacing }: { text: string; spacing?: number }) => (
  <Label $spacing={spacing}>
    {text}
    <Asterisk />
  </Label>
);

const FormPage = () => (
  <Page>
    <Header>
      <Brand>
        <TecLogo />
        Estudiante Líder
      </Brand>
      <MenuButton>
        <svg width="14" height="14" viewBox="0 0 14 14" stroke="#b7c4d2" strokeWidth="1.800">
          <path d="M0 2.500h14M0 7h14M0 11.500h14" />
        </svg>
      </MenuButton>
    </Header>
    <Columns>
      <Gutter />
      <SideColumn />
      <Main>
        <Panel>
          <Row>
            <FieldGroup $width={450}>
              <Select $height={36}>Industria Eléctrica y Electrónica<Chevron /></Select>
            </FieldGroup>
            <FieldGroup $width={450}>
              <Input $filled $spacing={-0.2}>SISCATP</Input>
            </FieldGroup>
          </Row>
          <LabelText text="Nombre descriptivo (¿Qué es? y ¿Qué hace?):" spacing={0.09} />
          <Input $spacing={0.02}>Sistema inteligente de clasificación y distribución de productos en almacenes</Input>
          <Row>
            <FieldGroup $width={529}>
              <LabelText text="Área de aplicación:" />
              <Select>Digitalización y Automatización<Chevron /></Select>
            </FieldGroup>
            <FieldGroup $width={371}>
              <LabelText text="Naturaleza Técnica:" spacing={0.2} />
              <Select $open>Seleccione una opción<Chevron /></Select>
              <Dropdown>
                {OPTIONS.map((o, i) => (
                  <Option key={o} $selected={i === 0}>{o}</Option>
                ))}
              </Dropdown>
            </FieldGroup>
          </Row>
          <LabelText text="Áreas Específicas del proyecto:" spacing={-0.04} />
          <CheckList>
            {AREAS.map((a) => (
              <CheckRow key={a.text}>
                <CheckBox />
                <CheckText $spacing={a.spacing}>{a.text}</CheckText>
              </CheckRow>
            ))}
          </CheckList>
        </Panel>
        <Note>
          <NoteLine $spacing={-0.07}>
            <svg width="20" height="16" viewBox="0 0 20 16">
              <circle cx="8" cy="8" r="8" fill="#003468" />
              <path d="M6.300 4.500L10 8l-3.700 3.500" fill="none" stroke="#fff" strokeWidth="1.800" />
            </svg>
            Ejes transversales: Mencionar el(los) eje(s) transversal(es) en el que se fundamenta
            <NoteEnd>la propuesta, establecidos en el Manual de</NoteEnd>
          </NoteLine>
          <NoteLine $spacing={-0.42}>
            Operación en el CAPÍTULO IV. COMPONENTES DE LA CUMBRE NACIONAL
            <Asterisk />
          </NoteLine>
        </Note>
      </Main>
    </Columns>
  </Page>
);

const WindowsTaskbar = () => (
  <Taskbar>
    <StartButton>
      <svg width="23" height="23" viewBox="0 0 23 23">
        <defs>
          <linearGradient id="win" x1="0" y1="0" x2="1" y2="1">
            <stop offset="0" stopColor="#85dcfb" />
            <stop offset=".5" stopColor="#3fc3fa" />
            <stop offset="1" stopColor="#0c93f5" />
          </linearGradient>
        </defs>
        <path d="M0 0h11v11H0zM12 0h11v11H12zM0 12h11v11H0zM12 12h11v11H12z" fill="url(#win)" />
      </svg>
    </StartButton>
    <SearchBox>
      <svg width="16" height="16" viewBox="0 0 16 16" fill="none" stroke="#e4e1de" strokeWidth="1.600">
        <circle cx="7" cy="6.500" r="5.500" fill="#6b655f" />
        <path d="M11 10.500l4 4.500" strokeWidth="2" />
      </svg>
      Búsqueda
    </SearchBox>
    {APPS.map((app, i) => (
      <AppCell key={i} $active={app.active}>
        {app.icon}
        {app.running && <RunMark $active={app.active} />}
      </AppCell>
    ))}
    <Tray>
      <TrayIcon $width={32}>
        <svg width="12" height="8" viewBox="0 0 12 8" fill="none" stroke="#fff" strokeWidth="1.500">
          <path d="M1 6.500l5-5 5 5" />
        </svg>
      </TrayIcon>
      <TrayIcon $width={32}>
        <svg width="18" height="18" viewBox="0 0 18 18" fill="none" stroke="#fff" strokeWidth="1.200">
          <path d="M1.500 6.500C4 1 11.500.5 15 5.500M15.500 1.500v4.300h-4.300M2 16.500V12h4.500M2.500 12.500q2 3.200 5.500 3.700" />
          <circle cx="12.500" cy="13.500" r="4.200" fill="#ff9a0a" stroke="none" />
        </svg>
      </TrayIcon>
      <TrayIcon $width={32}>
        <svg width="16" height="13" viewBox="0 0 16 13" fill="none" stroke="#fff" strokeWidth="1.200">
          <path d="M.6 5C4.700.2 11.300.2 15.400 5M2.900 7.200c2.900-3.400 7.300-3.400 10.200 0M5.100 9.400c1.700-2 4.100-2 5.800 0" />
          <circle cx="8" cy="11.200" r="1.500" fill="#fff" stroke="none" />
        </svg>
      </TrayIcon>
      <TrayIcon $width={16}>
        <svg width="16" height="14" viewBox="0 0 16 14" fill="none" stroke="#fff" strokeWidth="1.100">
          <path d="M.6 4.800h2.300L6.500 1.500v11L2.900 9.200H.6zM8.500 5q1 2 0 4M10.500 3.500q2.200 3.500 0 7" />
          <path d="M12.800 1.700q3.600 5.300 0 10.600" stroke="#77716c" />
        </svg>
      </TrayIcon>
      <TrayIcon $width={32}>
        <svg width="16" height="11" viewBox="0 0 16 11">
          <rect x=".6" y=".9" width="12.500" height="9" rx="2" fill="none" stroke="#fff" strokeWidth="1.200" />
          <rect x="2.300" y="2.600" width="9" height="5.600" rx=".6" fill="#fff" />
          <path d="M14 3.500h1.200q.8 0 .8 1v2q0 1-.8 1H14z" fill="#fff" />
        </svg>
      </TrayIcon>
      <Clock>
        09:10 p. m.
        <br />
        11/04/2025
      </Clock>
    </Tray>
  </Taskbar>
);

export default function App() {
  return (
    <Screen>
      <GlobalStyle />
      <BrowserTabs />
      <BrowserToolbar />
      <BookmarkBar />
      <Viewport>
        <FormPage />
        <Scrollbar>
          <svg width="10" height="8" viewBox="0 0 10 8"><path d="M5 1l4 6H1z" fill="#9f9f9f" stroke="#9f9f9f" strokeLinejoin="round" /></svg>
          <Thumb />
          <svg width="10" height="8" viewBox="0 0 10 8"><path d="M5 7L1 1h8z" fill="#9f9f9f" stroke="#9f9f9f" strokeLinejoin="round" /></svg>
        </Scrollbar>
      </Viewport>
      <WindowsTaskbar />
    </Screen>
  );
}
